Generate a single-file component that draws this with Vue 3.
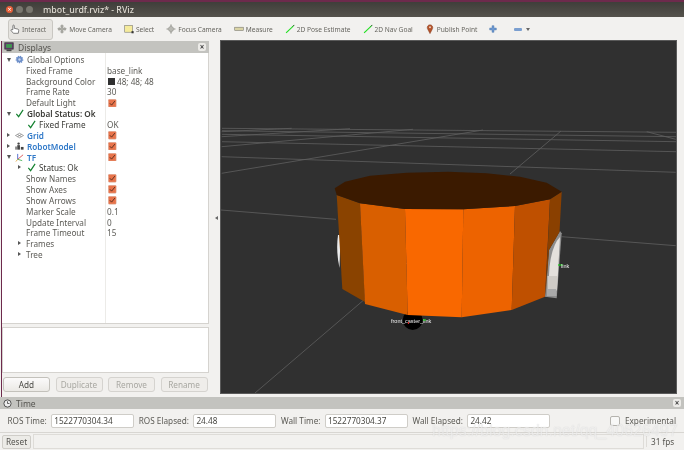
<script setup>
const tools = [
  { label: 'Interact', icon: 'hand', active: true },
  { label: 'Move Camera', icon: 'move' },
  { label: 'Select', icon: 'select' },
  { label: 'Focus Camera', icon: 'focus' },
  { label: 'Measure', icon: 'measure' },
  { label: '2D Pose Estimate', icon: 'arrow' },
  { label: '2D Nav Goal', icon: 'arrow' },
  { label: 'Publish Point', icon: 'pin' }
]
const rows = [
  { label: 'Global Options', indent: 0, arrow: 'down', icon: 'gear' },
  { label: 'Fixed Frame', indent: 1, value: 'base_link' },
  { label: 'Background Color', indent: 1, value: '48; 48; 48', swatch: true },
  { label: 'Frame Rate', indent: 1, value: '30' },
  { label: 'Default Light', indent: 1, check: true },
  { label: 'Global Status: Ok', indent: 0, arrow: 'down', icon: 'ok', strong: true },
  { label: 'Fixed Frame', indent: 2, icon: 'ok', value: 'OK', dark: true },
  { label: 'Grid', indent: 0, arrow: 'right', icon: 'grid', blue: true, check: true },
  { label: 'RobotModel', indent: 0, arrow: 'right', icon: 'robot', blue: true, check: true },
  { label: 'TF', indent: 0, arrow: 'down', icon: 'tf', blue: true, check: true },
  { label: 'Status: Ok', indent: 2, arrow: 'right', icon: 'ok', dark: true },
  { label: 'Show Names', indent: 1, check: true },
  { label: 'Show Axes', indent: 1, check: true },
  { label: 'Show Arrows', indent: 1, check: true },
  { label: 'Marker Scale', indent: 1, value: '0.1' },
  { label: 'Update Interval', indent: 1, value: '0' },
  { label: 'Frame Timeout', indent: 1, value: '15' },
  { label: 'Frames', indent: 1, arrow: 'right' },
  { label: 'Tree', indent: 1, arrow: 'right' }
]
const actions = [
  { label: 'Add', on: true },
  { label: 'Duplicate' },
  { label: 'Remove' },
  { label: 'Rename' }
]
const times = [
  { label: 'ROS Time:', value: '1522770304.34' },
  { label: 'ROS Elapsed:', value: '24.48' },
  { label: 'Wall Time:', value: '1522770304.37' },
  { label: 'Wall Elapsed:', value: '24.42' }
]
const gridLines = [
  [221.7, 156.7, 675.7, 172.3], [222, 141.7, 676, 151.7], [222, 134.3, 676, 141.7],
  [222, 130.7, 676, 136.7], [222, 128.3, 676, 132.3], [221.7, 173.3, 483, 130],
  [221.7, 146.7, 413, 129.3], [221.7, 136.7, 350, 128.7], [221.7, 131.7, 291.7, 128.3],
  [646.7, 131.7, 675.7, 139.3], [510, 174, 561, 131], [255, 393, 407, 263],
  [221, 210, 336, 219.3], [561.7, 236.7, 675.7, 245.7]
]
const faces = [
  { fill: '#8a4300', points: '336.7,195 360,203.3 365,302 342.3,289' },
  { fill: '#d95f00', points: '360,203.3 405,209 407.7,315 365,304' },
  { fill: '#f96800', points: '405,209 463.3,209.3 461.7,317.3 407.7,315' },
  { fill: '#ed6300', points: '463.3,209.3 515,206 511.7,310 461.7,317.3' },
  { fill: '#bf5000', points: '515,206 550,199.3 545,296.7 511.7,310' },
  { fill: '#8a4000', points: '550,199.3 561.7,191.7 559.5,232 549,250 545.5,296' }
]
const top = '334.7,188.3 345,181.7 370,175.7 406.7,172.7 448.3,171.7 486.7,173.3 520,176.7 546.7,182.7 561.7,191.7 550,199.3 515,206 463.3,209.3 405,209 360,203.3 336.7,195'
</script>

<template>
  <div class="window">
    <div class="titlebar">
      <span class="dot close">×</span>
      <span class="dot"></span>
      <span class="dot"></span>
      <span class="wintitle">mbot_urdf.rviz* - RViz</span>
    </div>

    <div class="toolbar">
      <div v-for="t in tools" :key="t.label" class="tool" :class="{ active: t.active }">
        <svg class="ticon" viewBox="0 0 14 14">
          <g v-if="t.icon === 'hand'" fill="#fff" stroke="#444" stroke-width="0.9">
            <path d="M4 8V2.500a1 1 0 0 1 2 0V6l5 1.200q1.500.4 1.200 2L11.600 13H4.800L1.500 9.200q-.5-1.400 1-1.400z" />
          </g>
          <g v-else-if="t.icon === 'move'" fill="#b9b9b3" stroke="#77776f" stroke-width="0.7">
            <path d="M7 1l2 2H8v3h3V5l2 2-2 2V8H8v3h1l-2 2-2-2h1V8H3v1L1 7l2-2v1h3V3H5z" />
          </g>
          <g v-else-if="t.icon === 'select'">
            <rect x="1" y="2" width="11" height="9.500" fill="#f5eb9c" stroke="#77776f" stroke-width="0.8" />
            <rect x="10.500" y="10" width="3" height="3" fill="#333" />
          </g>
          <g v-else-if="t.icon === 'focus'" fill="#b9b9b3" stroke="#8d8d86" stroke-width="0.7">
            <circle cx="7" cy="7" r="3.600" />
            <path d="M7 .8v2.600M7 10.600v2.600M.8 7h2.600M10.600 7h2.600" stroke-width="1.600" />
          </g>
          <g v-else-if="t.icon === 'measure'">
            <rect x="1" y="4.500" width="12" height="4.500" fill="#d9d3a4" stroke="#77776f" stroke-width="0.8" />
          </g>
          <g v-else-if="t.icon === 'arrow'">
            <path d="M1.500 12.500 11.500 3" stroke="#22e022" stroke-width="1.600" />
            <path d="M11 3.400 13 1.300" stroke="#155f15" stroke-width="1.400" />
          </g>
          <g v-else>
            <path d="M7 13.500 3.400 6.500a3.900 3.900 0 1 1 7.200 0z" fill="#b5532a" stroke="#7d3a20" stroke-width="0.6" />
            <circle cx="7" cy="4.600" r="1.300" fill="#f2d9c9" />
          </g>
        </svg>
        <span>{{ t.label }}</span>
      </div>
      <svg class="plus" viewBox="0 0 12 12">
        <path d="M4.500 1h3v3.500h3.500v3H7.500V11h-3V7.500H1v-3h3.500z" fill="#6d97cf" stroke="#4a73a8" stroke-width="0.6" />
      </svg>
      <span class="minus"></span>
      <span class="caret"></span>
    </div>

    <div class="main">
      <div class="sidebar">
        <div class="dockhead">
          <svg class="monitor" viewBox="0 0 12 12">
            <rect x="1" y="1" width="10" height="7.500" fill="#6c3b78" stroke="#333" />
            <rect x="2.500" y="2.500" width="7" height="4.500" fill="#3f9a4f" />
            <rect x="3" y="9" width="6" height="2" fill="#444" />
          </svg>
          <span class="docktitle">Displays</span>
          <span class="x">×</span>
        </div>

        <div class="tree">
          <div v-for="(r, i) in rows" :key="i" class="row">
            <div class="namecell" :class="'ind' + r.indent">
              <span class="arrow" :class="r.arrow"></span>
              <svg v-if="r.icon" class="ricon" viewBox="0 0 10 10">
                <path v-if="r.icon === 'ok'" d="M1.500 5.500 4 8.500 9 1" fill="none" stroke="#12802e" stroke-width="1.300" />
                <g v-else-if="r.icon === 'gear'">
                  <circle cx="5" cy="5" r="3.400" fill="#6d8fc9" stroke="#6d8fc9" stroke-width="1.800" stroke-dasharray="1.300 1" />
                  <circle cx="5" cy="5" r="1.300" fill="#c5d4ee" />
                </g>
                <g v-else-if="r.icon === 'grid'" fill="none" stroke="#777" stroke-width="0.700">
                  <path d="M.5 5 5 2.500 9.500 5 5 7.500zM2.700 3.800 7.200 6.300M7.200 3.800 2.700 6.300" />
                </g>
                <g v-else-if="r.icon === 'robot'" fill="#444">
                  <circle cx="4" cy="1.800" r="1.300" />
                  <rect x="2.500" y="3.500" width="3" height="5" />
                  <rect x="6.500" y="5.500" width="3" height="3" />
                  <rect x="0.500" y="5" width="1.300" height="3.500" />
                </g>
                <g v-else fill="none" stroke-width="0.900">
                  <path d="M3 7 9 2" stroke="#d43c3c" />
                  <path d="M3 7V1" stroke="#3553c9" />
                  <path d="M3 7 1 9.500" stroke="#e0a030" />
                  <path d="M3 7 8 8.500" stroke="#3cab4a" />
                </g>
              </svg>
              <span class="name" :class="{ blue: r.blue, strong: r.strong, dark: r.dark }">{{ r.label }}</span>
            </div>
            <div class="valcell">
              <span v-if="r.swatch" class="swatch"></span>
              <span v-if="r.value">{{ r.value }}</span>
              <svg v-if="r.check" class="chk" viewBox="0 0 9 9">
                <rect x="0.300" y="0.300" width="8.400" height="8.400" rx="1" fill="#e8734a" stroke="#d8c4b8" stroke-width="0.500" />
                <path d="M2 4.500 3.800 6.500 7.300 2.200" fill="none" stroke="#5a3020" stroke-width="1" />
              </svg>
            </div>
          </div>
        </div>

        <div class="desc"></div>

        <div class="actions">
          <button v-for="a in actions" :key="a.label" class="btn" :class="{ on: a.on }">{{ a.label }}</button>
        </div>
      </div>

      <span class="handle"></span>

      <div class="viewport">
        <svg class="scene" viewBox="221 41 455 352">
          <g stroke="#5f5f5f" stroke-width="0.800">
            <line v-for="(l, i) in gridLines" :key="i" :x1="l[0]" :y1="l[1]" :x2="l[2]" :y2="l[3]" />
          </g>
          <path d="M338 235q-2.200 16 1.500 33l1-33z" fill="#ececec" />
          <circle cx="412.700" cy="320" r="10" fill="#000" />
          <polygon points="560,231 561.700,233.300 556.700,298.300 545,296.700 549,250" fill="#8d8d8d" />
          <path d="M560 237q-8 8-10.500 30l-1.500 23 9 .5z" fill="#e4e0dc" />
          <rect x="547.500" y="276" width="9.500" height="13" fill="#cfcbc6" />
          <rect x="547" y="289" width="9.500" height="7" fill="#a9a9a9" />
          <polygon v-for="f in faces" :key="f.fill + f.points" :points="f.points" :fill="f.fill" />
          <polygon :points="top" fill="#3b1a00" />
          <path d="M558 265h5" stroke="#18d018" stroke-width="1.200" />
          <text class="tiny" x="391" y="323">front_caster_link</text>
          <text class="tiny" x="561" y="268">link</text>
          <path d="M408.500 322v2" stroke="#e02020" stroke-width="1.200" />
          <path d="M423 320h3" stroke="#18d018" stroke-width="1.200" />
        </svg>
      </div>

      <span class="rightgap"></span>
    </div>

    <div class="timehead">
      <svg class="clock" viewBox="0 0 10 10">
        <circle cx="5" cy="5" r="4" fill="#eee" stroke="#444" stroke-width="1" />
        <path d="M5 2.500V5h2.200" fill="none" stroke="#444" stroke-width="0.900" />
      </svg>
      <span class="docktitle">Time</span>
      <span class="x">×</span>
    </div>

    <div class="timerow">
      <template v-for="t in times" :key="t.label">
        <span class="tlabel">{{ t.label }}</span>
        <span class="field">{{ t.value }}</span>
      </template>
      <span class="spring"></span>
      <span class="box"></span>
      <span class="tlabel">Experimental</span>
    </div>

    <div class="status">
      <button class="reset">Reset</button>
      <span class="statusmsg"></span>
      <span class="fps">31 fps</span>
      <span class="watermark">https://blog.csdn.net/qq_40626497</span>
    </div>
  </div>
</template>

<style>
html, body { margin: 0; background: #f2f1ef; }
</style>

<style scoped>
.window {
  width: 684px;
  height: 450px;
  display: flex;
  flex-direction: column;
  overflow: hidden;
  position: relative;
  background: #f2f1ef;
  border-top: 2px solid #6d2a4c;
  box-sizing: border-box;
  font: 8.200px "Noto Sans", "Open Sans", sans-serif;
  color: #5c5b56;
  filter: blur(0.35px);
}
.titlebar {
  height: 15px;
  flex: none;
  display: flex;
  align-items: center;
  gap: 3px;
  padding-left: 6px;
  background: linear-gradient(#3f3e3a, #55524c);
}
.dot {
  width: 7px;
  height: 7px;
  border-radius: 50%;
  background: #79776f;
  font-size: 7px;
  line-height: 7px;
  text-align: center;
  color: #fff;
}
.dot.close { background: #e6603a; }
.wintitle {
  margin-left: 7px;
  color: #dfdbd2;
  font-size: 8.800px;
  font-weight: 500;
}
.toolbar {
  height: 24px;
  flex: none;
  display: flex;
  align-items: center;
  padding-left: 8px;
  gap: 12px;
  background: #f2f1ef;
}
.tool {
  display: flex;
  align-items: center;
  gap: 2px;
  white-space: nowrap;
  color: #66655f;
  font-size: 6.600px;
}
.tool.active {
  height: 19px;
  padding: 0 6px 0 1px;
  margin-right: -8px;
  border: 1px solid #c9c7c2;
  border-radius: 3px;
  background: #e6e4e0;
}
.ticon { width: 10px; height: 10px; flex: none; }
.plus { width: 8px; height: 8px; }
.minus {
  width: 8px;
  height: 3px;
  margin-left: 5px;
  background: #7b9fd0;
  border-radius: 1px;
}
.caret {
  margin-left: -8px;
  margin-top: 3px;
  border: 2.500px solid transparent;
  border-top: 3px solid #666;
}
.main {
  height: 356px;
  flex: none;
  display: flex;
}
.sidebar {
  width: 207px;
  flex: none;
  margin-left: 1px;
  border-left: 1px solid #6d2a4c;
  display: flex;
  flex-direction: column;
}
.dockhead, .timehead {
  height: 12px;
  flex: none;
  display: flex;
  align-items: center;
  background: #c3c3bf;
  color: #55544f;
  padding: 0 3px 0 2px;
}
.timehead { padding-left: 3px; }
.monitor { width: 10px; height: 10px; }
.clock { width: 9px; height: 9px; }
.docktitle { margin-left: 4px; flex: 1; font-size: 8.500px; }
.x {
  width: 8px;
  height: 8px;
  border-radius: 2px;
  background: #ecebe8;
  color: #444;
  font-size: 8px;
  font-weight: 700;
  line-height: 8px;
  text-align: center;
}
.tree {
  height: 271px;
  flex: none;
  box-sizing: border-box;
  background: #fff;
  border-right: 1px solid #d5d3cf;
  border-bottom: 1px solid #d5d3cf;
  padding-top: 1px;
  background-image: linear-gradient(#ecebe8, #ecebe8);
  background-size: 1px 100%;
  background-position: 103px 0;
  background-repeat: no-repeat;
}
.row {
  height: 10.850px;
  display: flex;
  align-items: center;
  white-space: nowrap;
}
.namecell {
  width: 104px;
  height: 10.850px;
  flex: none;
  display: flex;
  align-items: center;
  position: relative;
  box-sizing: border-box;
  padding-left: 13px;
}
.namecell.ind1 { padding-left: 24px; }
.namecell.ind2 { padding-left: 25px; }
.arrow { position: absolute; }
.arrow.down {
  left: 5px;
  top: 3.500px;
  border: 2px solid transparent;
  border-top: 4px solid #555;
}
.arrow.right {
  left: 5px;
  top: 3px;
  border: 2.500px solid transparent;
  border-left: 3.500px solid #555;
}
.ind1 .arrow.right, .ind2 .arrow.right { left: 16px; }
.ricon { width: 9px; height: 9px; flex: none; margin-right: 3px; }
.name.blue { color: #2f78c8; font-weight: 600; }
.name.strong { color: #3a3a36; font-weight: 600; }
.name.dark { color: #3a3a36; }
.valcell {
  display: flex;
  align-items: center;
  gap: 2px;
  padding-left: 1px;
}
.swatch { width: 7px; height: 7px; margin-left: 1px; background: #303030; }
.chk { width: 8.500px; height: 8.500px; margin-left: 1px; }
.desc {
  height: 46px;
  flex: none;
  margin-top: 3px;
  background: #fff;
  border: 1px solid #d5d3cf;
  box-sizing: border-box;
}
.actions {
  flex: none;
  display: flex;
  gap: 5.500px;
  padding: 4px 0 0 1px;
}
.btn {
  width: 47px;
  height: 14.500px;
  padding: 0;
  border: 1px solid #d5d3cf;
  border-radius: 3px;
  background: #efedea;
  color: #a8a7a1;
  font: inherit;
}
.btn.on {
  color: #4a4944;
  background: linear-gradient(#fbfafa, #ebe9e5);
  border-color: #c3c1bb;
}
.handle {
  width: 0;
  height: 0;
  flex: none;
  align-self: center;
  margin-left: 6px;
  margin-right: 3px;
  margin-top: -2px;
  border: 2px solid transparent;
  border-left: 0;
  border-right: 3px solid #666;
}
.viewport {
  flex: none;
  width: 455px;
  height: 352px;
  outline: 1px solid #5a5a5a;
  background: #303030;
}
.rightgap { flex: 1; }
.scene { display: block; width: 455px; height: 352px; }
.tiny {
  font: 5.500px "Liberation Sans", sans-serif;
  fill: #eee;
}
.timerow {
  height: 23px;
  flex: none;
  display: flex;
  align-items: center;
  padding: 0 8px 0 7.500px;
  border-bottom: 1px solid #d8d6d2;
}
.tlabel { white-space: nowrap; }
.field {
  width: 83px;
  height: 14px;
  margin: 0 4.500px;
  padding-left: 2px;
  box-sizing: border-box;
  background: #fff;
  border: 1px solid #cfcdc8;
  border-radius: 2px;
  line-height: 12px;
  color: #4a4944;
}
.spring { flex: 1; }
.box {
  width: 8px;
  height: 8px;
  margin-right: 5px;
  background: #f8f8f7;
  border: 1px solid #b5b3ae;
  border-radius: 2px;
}
.status {
  flex: 1;
  display: flex;
  align-items: center;
  gap: 2px;
  padding: 0 2px;
  position: relative;
}
.reset {
  width: 29px;
  height: 14px;
  padding: 0;
  font: inherit;
  color: #55544f;
  background: #ecebe7;
  border: 1px solid #cfcdc8;
  border-radius: 2px;
}
.statusmsg {
  flex: 1;
  height: 13px;
  border: 1px solid #dedcd8;
}
.fps { width: 36px; padding-left: 4px; box-sizing: border-box; color: #55544f; border-left: 1px solid #dedcd8; }
.watermark {
  position: absolute;
  left: 432px;
  top: -11px;
  font: 16px "Liberation Sans", sans-serif;
  color: rgba(255, 255, 255, 0.6);
  text-shadow: 0 0 1px rgba(120, 120, 120, 0.3);
  white-space: nowrap;
}
</style>
